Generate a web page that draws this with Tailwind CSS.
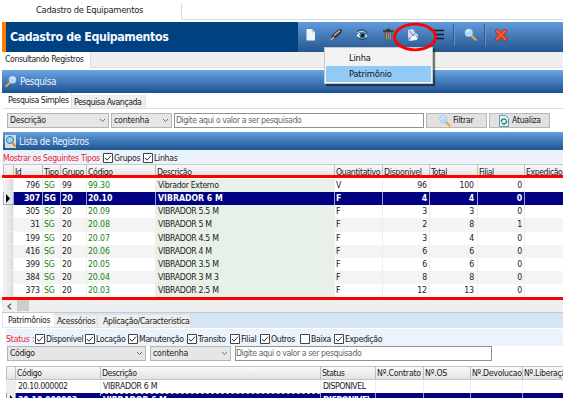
<!DOCTYPE html>
<html lang="pt-BR">
<head>
<meta charset="utf-8">
<title>Cadastro de Equipamentos</title>
<script src="https://cdn.jsdelivr.net/npm/@tailwindcss/browser@4"></script>
</head>
<body class="bg-white">
<svg class="hidden">
  <symbol id="chev" viewBox="0 0 8 6"><path d="M1 1.2 4 4.2 7 1.2" fill="none" stroke="#555" stroke-width="1"/></symbol>
  <symbol id="lens" viewBox="0 0 14 14"><path d="m8 8 4.500 4.500" stroke="#e9a63c" stroke-width="2.400" stroke-linecap="round"/><circle cx="5.200" cy="5" r="3.700" fill="#a9dcfb" stroke="#dfeefa" stroke-width="1.200"/><circle cx="5.200" cy="5" r="4.300" fill="none" stroke="#6897cf" stroke-width=".5"/><path d="M3.200 4.500q.6-1.800 2.500-1.600" stroke="#fff" fill="none"/></symbol>
  <symbol id="on" viewBox="0 0 10 10"><path d="M.5.5h9v9h-9z" fill="#fff" stroke="#444"/><path d="m2 5 2 2.200L8 2.700" fill="none" stroke="#333"/></symbol>
  <symbol id="off" viewBox="0 0 10 10"><path d="M.5.5h9v9h-9z" fill="#fff" stroke="#444"/></symbol>
</svg>
<div class="relative w-[563px] h-[398px] overflow-hidden pl-[2px] font-['DejaVu_Sans_Condensed','DejaVu_Sans',sans-serif] text-[8.7px] leading-[13px] tracking-[-0.43px] text-[#222] whitespace-nowrap [font-stretch:condensed]">
  <!-- Window tab -->
  <div class="flex h-[22px]">
    <div class="w-[179px] pl-[34px] pt-[3px] text-[9.3px] tracking-[-0.25px]">Cadastro de Equipamentos</div>
    <div class="flex-1 mt-[3px] h-[17px] border-l border-b border-[#dcdcdc]"></div>
  </div>
  <!-- Title and toolbar -->
  <div class="flex h-[30px]">
    <div class="w-[4px] bg-[#ff8000]"></div>
    <div class="w-[292px] bg-[#004182] pl-[4px] pt-[7px] text-[#f4f8ff] font-bold text-[12.3px] leading-[16px] tracking-[-0.4px]">Cadastro de Equipamentos</div>
    <div class="flex-1 bg-linear-to-b from-[#629bdc] to-[#24568f]">
      <svg class="w-[265px] h-[30px]" viewBox="298 22 265 30">
        <path d="M306.500 29h5.500l3 3v8.500h-8.500z" fill="#eef3fb"/><path d="M312 29v3h3" fill="#bacbe0" stroke="#a1b7d1" stroke-width=".5"/>
        <path d="m330.500 40.500 2-6 6-5q3.500-1.500 3.500 1 0 2-5 6.500z" fill="#35383b"/><path d="m331 40 3-3m0-1.500 6-5" stroke="#c9c9bd" stroke-width="1.300"/>
        <path d="M356 35.500q6-7.500 12 0-5 6-12 0z" fill="#e8f2f8"/><circle cx="362.500" cy="35.500" r="3" fill="#2c6b98"/><circle cx="362.500" cy="35.500" r="1.400" fill="#111"/><path d="M355.500 35.500q5.500-7 12.500 0M357 31.500q5-4 10.500 1M358.500 38q4 3.500 8-.5" fill="none" stroke="#263748" stroke-width=".9"/><path d="M357 32.700q4.500-2.500 8-.5" fill="none" stroke="#dcebf5" stroke-width=".8"/>
        <path d="m384 31 1 9.500h6.500l1-9.500z" fill="#605e59"/><path d="M386.500 32.500v7m2-7v7m2-7v7" stroke="#aaa89f" stroke-width=".8"/><path d="M383 31h10.500M386.500 29.500h3.500" stroke="#303030" stroke-width="1.400"/>
        <path d="m408 30 5-1 2 3.500 3 2.500-1 5-8 1-1-5z" fill="#d9dcf5"/><path d="m409.500 31 3.500 4 4-3.500m-8 8 3-4 5 1" stroke="#687fb8" fill="none"/><path d="m411 36.500 4-1 2.500 3-5.500 2z" fill="#fff"/>
        <path d="M434 30.500h10M434 34.500h10M434 38.500h10" stroke="#111a24" stroke-width="1.300"/>
        <path d="M453.500 24v22M484.500 24v22" stroke="#315b8e"/><path d="M454.500 24v22M485.500 24v22" stroke="#78a6dc" stroke-width=".6"/>
        <use href="#lens" x="464" y="28" width="13" height="13"/>
        <path d="m497 31 8 8m0-8-8 8" stroke="#a72716" stroke-width="4" stroke-linecap="round"/><path d="m497 31 8 8m0-8-8 8" stroke="#ff5631" stroke-width="2.600" stroke-linecap="round"/>
      </svg>
    </div>
  </div>
  <div class="flex h-[18px] bg-white">
    <div class="w-[88px] pl-[3px] pt-[1px]">Consultando Registros</div>
    <div class="flex-1 h-[16px] bg-[#efefef] border-l border-b border-[#dedede]"></div>
  </div>
  <!-- Search panel -->
  <div class="flex items-center h-[23px] pl-[3px] gap-[3px] bg-linear-to-b from-[#6ba6e5] to-[#1d5290] text-[#e8f3ff] text-[9.9px] tracking-[-0.35px]">
    <svg class="w-[12px] h-[13px] -scale-x-100"><use href="#lens"/></svg>Pesquisa
  </div>
  <div class="flex h-[16px] items-end border-b border-[#dfdfdf] ml-[1px]">
    <div class="w-[69px] h-[15px] pl-[5px] leading-[15px] bg-white border-r border-[#ddd]">Pesquisa Simples</div>
    <div class="w-[74px] h-[13px] pl-[2px] leading-[14px] bg-[#efefef] border-r border-[#e3e3e3]">Pesquisa Avançada</div>
  </div>
  <div class="flex h-[23px] pt-[4px] pl-[5px] gap-[2px]">
    <div class="w-[102px] h-[15px] border border-[#b5b5b5] bg-[#e6e6e6] flex items-center justify-between px-[2px] tracking-[-0.3px]">Descrição<svg class="w-[7px] h-[5px]"><use href="#chev"/></svg></div>
    <div class="w-[61px] h-[15px] border border-[#b5b5b5] bg-[#e6e6e6] flex items-center justify-between px-[2px] tracking-[-0.2px]">contenha<svg class="w-[7px] h-[5px]"><use href="#chev"/></svg></div>
    <div class="w-[250px] h-[15px] border border-[#929292] pl-[1px] text-[#666] leading-[13px]">Digite aqui o valor a ser pesquisado</div>
    <div class="w-[61px] h-[15px] border border-[#b8b8b8] bg-[#e1e1e1] flex items-center pl-[12px] gap-[2px] tracking-[-0.3px]"><svg class="w-[12px] h-[12px]"><use href="#lens"/></svg>Filtrar</div>
    <div class="w-[61px] h-[15px] border border-[#b8b8b8] bg-[#e1e1e1] flex items-center pl-[9px] gap-[3px] tracking-[-0.3px]"><svg class="w-[10px] h-[12px]" viewBox="0 0 10 12"><path d="M.5.5h6l3 3v8h-9z" fill="#e4f3ff" stroke="#6794bd"/><path d="M2.500 5.500q2-3 4.500-.5M7.500 7q-2 3.500-4.500 1M2.500 5v2m5-1.500V8" stroke="#17863d" stroke-width="1.400" fill="none"/></svg>Atualiza</div>
  </div>
  <!-- Record list -->
  <div class="flex items-center h-[18px] pl-[2px] gap-[3px] bg-linear-to-b from-[#639edd] to-[#1f5593] text-[#e8f3ff] text-[9.7px] tracking-[-0.42px] ml-[1px]">
    <svg class="w-[11px] h-[13px]" viewBox="0 0 11 13"><path d="M0 0h11v13H0z" fill="#d5ddd9"/><circle cx="5" cy="5" r="3.500" fill="#93d5ff" stroke="#3577a7"/><path d="m7.500 8 3 3.500" stroke="#d28e37" stroke-width="2"/></svg>Lista de Registros
  </div>
  <div class="flex items-center h-[14px] bg-[#eaf2fc] pt-[2px]">
    <div class="w-[101px] text-[#f02030] pl-[1px] tracking-[-0.33px]">Mostrar os Seguintes Tipos :</div>
    <div class="w-[40px] flex items-center gap-[1px] tracking-[-0.3px]"><svg class="w-[10px] h-[10px]"><use href="#on"/></svg>Grupos</div>
    <div class="flex items-center gap-[1px] tracking-[-0.3px]"><svg class="w-[10px] h-[10px]"><use href="#on"/></svg>Linhas</div>
  </div>
  <div class="h-[14px] -mb-[3px] bg-linear-to-b from-[#f9f9f9] to-[#e0e0e0] border-t border-[#c9c9c9] ml-[1px] grid grid-cols-[10px_29px_18px_26px_69px_179px_48px_47px_48px_47px_39px] *:border-l *:border-[#bdbdbd] *:pl-px *:leading-[15px] *:h-[13px]">
    <div></div><div>Id</div><div>Tipo</div><div>Grupo</div><div>Código</div><div>Descrição</div><div class="tracking-[-0.36px]">Quantitativo</div><div class="tracking-[-0.3px]">Disponivel</div><div>Total</div><div>Filial</div><div>Expedição</div>
  </div>
  <div class="relative h-[3px] bg-[#ff0000]"></div>
  <div id="rows" class="h-[119px] pt-[1px] ml-[1px] overflow-hidden"></div>
  <div class="h-[3px] bg-[#ff0000]"></div>
  <div class="h-[13px] bg-[#efefef] border-b border-[#c5c9ce] flex">
    <div class="w-[15px] flex items-center justify-center"><svg class="w-[5px] h-[7px]" viewBox="0 0 5 7"><path d="M4 .7 1 3.500 4 6.300" fill="none" stroke="#555" stroke-width="1.200"/></svg></div>
    <div class="w-[12px] h-[11px] bg-[#cdcdcd]"></div>
  </div>
  <!-- Assets -->
  <div class="flex items-end h-[15px] bg-[#d5e5f6] border-b border-[#e5e5e5] pl-[1px] tracking-[-0.33px]">
    <div class="w-[51px] h-[14px] bg-white pl-[5px] leading-[14px]">Patrimônios</div>
    <div class="w-[44px] h-[12px] bg-[#efefef] border-r border-[#ddd] pl-[3px]">Acessórios</div>
    <div class="w-[93px] h-[12px] bg-[#efefef] border-r border-[#ddd] pl-[5px]">Aplicação/Caracteristica</div>
  </div>
  <div id="status" class="flex items-center h-[17px] bg-[#ebf3fd] mt-[1px] ml-[4px] pt-[3px] tracking-[-0.35px] *:flex *:items-center *:gap-[1px]">
    <div class="w-[29px] text-[#f02030] tracking-[-0.2px]">Status :</div>
    <div class="w-[50px]"><svg class="w-[10px] h-[10px]"><use href="#on"/></svg>Disponível</div>
    <div class="w-[43px]"><svg class="w-[10px] h-[10px]"><use href="#on"/></svg>Locação</div>
    <div class="w-[59px]"><svg class="w-[10px] h-[10px]"><use href="#on"/></svg>Manutenção</div>
    <div class="w-[43px]"><svg class="w-[10px] h-[10px]"><use href="#on"/></svg>Transito</div>
    <div class="w-[30px]"><svg class="w-[10px] h-[10px]"><use href="#on"/></svg>Filial</div>
    <div class="w-[40px]"><svg class="w-[10px] h-[10px]"><use href="#on"/></svg>Outros</div>
    <div class="w-[34px]"><svg class="w-[10px] h-[10px]"><use href="#off"/></svg>Baixa</div>
    <div><svg class="w-[10px] h-[10px]"><use href="#on"/></svg>Expedição</div>
  </div>
  <div class="flex h-[20px] pl-[5px]">
    <div class="w-[139px] h-[15px] border border-[#b5b5b5] bg-[#e6e6e6] flex items-center justify-between px-[2px]">Código<svg class="w-[7px] h-[5px]"><use href="#chev"/></svg></div>
    <div class="w-[81px] ml-[4px] h-[15px] border border-[#b5b5b5] bg-[#e6e6e6] flex items-center justify-between px-[2px] tracking-[-0.2px]">contenha<svg class="w-[7px] h-[5px]"><use href="#chev"/></svg></div>
    <div class="w-[257px] ml-[4px] h-[15px] border border-[#929292] text-[#666]">Digite aqui o valor a ser pesquisado</div>
  </div>
  <div class="ml-[4px] h-[14px] bg-linear-to-b from-[#f9f9f9] to-[#e2e2e2] border-y border-[#c4c4c4] grid grid-cols-[9px_85px_220px_55px_48px_47px_52px_41px] *:border-l *:border-[#bdbdbd] *:pl-px *:h-[12px]">
    <div></div><div>Código</div><div>Descrição</div><div>Status</div><div class="tracking-[-0.2px]">Nº.Contrato</div><div class="tracking-[-0.2px]">Nº.OS</div><div class="tracking-[-0.3px]">Nº.Devolucao</div><div class="tracking-[-0.3px]">Nº.Liberação</div>
  </div>
  <div class="ml-[4px] h-[13px] grid grid-cols-[9px_85px_220px_55px_48px_47px_52px_41px] *:border-l *:border-[#eeeeee] *:pl-[2px]">
    <div class="bg-[#ededed]"></div><div>20.10.000002</div><div class="tracking-[-0.3px]">VIBRADOR 6 M</div><div>DISPONIVEL</div><div></div><div></div><div></div><div></div>
  </div>
  <div class="ml-[4px] h-[13px] bg-[#000080] text-white font-bold tracking-[-0.1px] grid grid-cols-[9px_85px_220px_55px_48px_47px_52px_41px] *:border-l *:border-[#9a9ac4] *:pl-[2px] *:leading-[14px]">
    <div class="bg-[#ededed] text-black"><svg class="w-[6px] h-[9px] mt-[2px]" viewBox="0 0 6 9"><path d="m1 0 4 4.500L1 9z"/></svg></div><div>20.10.000003</div><div class="border-t border-dashed border-t-[#d0d080]! leading-[12px]!">VIBRADOR 6 M</div><div class="tracking-[-0.5px]">DISPONIVEL</div><div></div><div></div><div></div><div></div>
  </div>
  <!-- Open toolbar menu -->
  <div class="absolute left-[324px] top-[47px] w-[109px] h-[37px] bg-[#f2f2f2] border border-[#c8c8c8] p-px shadow-[2px_2px_1px_rgba(0,0,0,0.5)] text-[9.2px] tracking-[-0.15px] text-[#111]">
    <div class="h-[17px] pl-[23px] leading-[18px]">Linha</div>
    <div class="h-[16px] pl-[23px] bg-[#91c9f7] leading-[16px]">Patrimônio</div>
  </div>
  <svg class="absolute left-[392px] top-[22px] w-[46px] h-[30px]" viewBox="0 0 46 30"><ellipse cx="23" cy="15" rx="20.500" ry="12.800" fill="none" stroke="#f00" stroke-width="2.800"/></svg>
</div>
<script>
const records = [
  [796,'99','99.30','Vibrador Externo','V',96,100,0],
  [307,'20','20.10','VIBRADOR 6 M','F',4,4,0],
  [305,'20','20.09','VIBRADOR 5.5 M','F',3,3,0],
  [31,'20','20.08','VIBRADOR 5 M','F',2,8,1],
  [199,'20','20.07','VIBRADOR 4.5 M','F',3,4,0],
  [416,'20','20.06','VIBRADOR 4 M','F',6,6,0],
  [399,'20','20.05','VIBRADOR 3.5 M','F',6,6,0],
  [384,'20','20.04','VIBRADOR 3 M 3','F',8,8,0],
  [373,'20','20.03','VIBRADOR 2.5 M','F',12,13,0]
];
document.getElementById('rows').innerHTML = records.map((r, i) => {
  const sel = i === 1;
  const tone = sel ? 'bg-[#000080] text-white font-bold *:border-[#a5a5cc]' : (i % 2 ? 'bg-[#f4f4f4]' : 'bg-white') + ' *:border-[#eeeeee]';
  const green = sel ? '' : 'text-[#118811]';
  const arrow = sel ? '<svg class="w-[6px] h-[9px] mt-[2px]" viewBox="0 0 6 9"><path fill="#000" d="m1 0 4 4.500L1 9z"/></svg>' : '';
  return `<div class="${tone} h-[13.125px] tracking-[-0.1px] grid grid-cols-[10px_29px_18px_26px_69px_179px_48px_47px_48px_47px_39px] *:border-l *:pl-px">
    <div class="bg-linear-to-r from-[#f5f5f5] to-[#dcdcdc] border-b border-b-white">${arrow}</div>
    <div class="text-right pr-[2px]">${r[0]}</div><div class="${green}">SG</div><div>${r[1]}</div><div class="${green}">${r[2]}</div>
    <div class="${sel ? '' : 'bg-[#e8f1e8]'}"><span class="${sel ? 'tracking-[0px]' : 'tracking-[-0.33px]'} pl-px">${r[3]}</span></div><div>${r[4]}</div>
    <div class="text-right pr-[2px]">${r[5]}</div><div class="text-right pr-[3px]">${r[6]}</div><div class="text-right pr-[2px]">${r[7]}</div><div></div></div>`;
}).join('');
</script>
</body>
</html>
